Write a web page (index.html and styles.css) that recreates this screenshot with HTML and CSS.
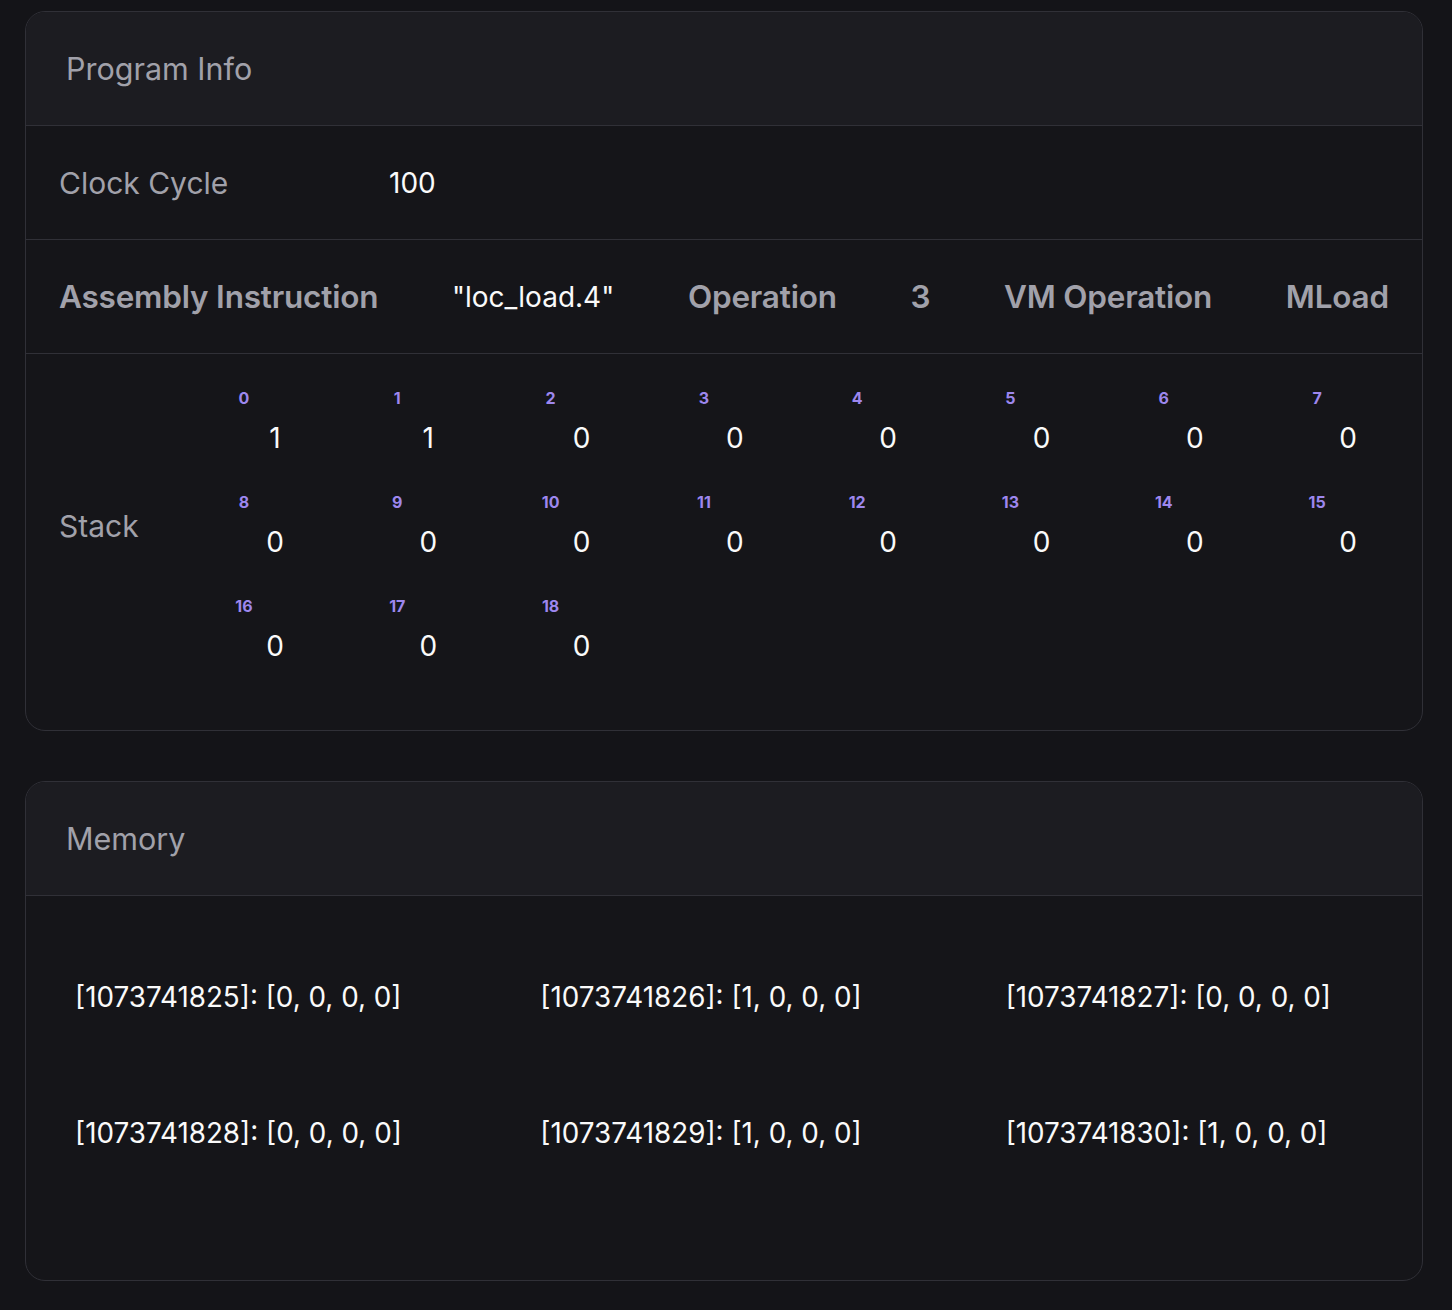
FILE: index.html
```html
<!DOCTYPE html>
<html lang="en">
<head>
  <meta charset="UTF-8">
  <title>Program Info</title>
  <link rel="stylesheet" href="styles.css">
</head>
<body>
  <div class="card">
    <div class="card-header">Program Info</div>
    <div class="row clock-row">
      <span class="label">Clock Cycle</span>
      <span class="value">100</span>
    </div>
    <div class="row asm-row">
      <span class="label strong">Assembly Instruction</span>
      <span class="value">"loc_load.4"</span>
      <span class="label strong">Operation</span>
      <span class="label strong">3</span>
      <span class="label strong">VM Operation</span>
      <span class="label strong">MLoad</span>
    </div>
    <div class="row stack-row">
      <span class="label stack-label">Stack</span>
      <div class="stack-grid">
        <div class="slot"><span class="idx">0</span><span class="val">1</span></div>
        <div class="slot"><span class="idx">1</span><span class="val">1</span></div>
        <div class="slot"><span class="idx">2</span><span class="val">0</span></div>
        <div class="slot"><span class="idx">3</span><span class="val">0</span></div>
        <div class="slot"><span class="idx">4</span><span class="val">0</span></div>
        <div class="slot"><span class="idx">5</span><span class="val">0</span></div>
        <div class="slot"><span class="idx">6</span><span class="val">0</span></div>
        <div class="slot"><span class="idx">7</span><span class="val">0</span></div>
        <div class="slot"><span class="idx">8</span><span class="val">0</span></div>
        <div class="slot"><span class="idx">9</span><span class="val">0</span></div>
        <div class="slot"><span class="idx">10</span><span class="val">0</span></div>
        <div class="slot"><span class="idx">11</span><span class="val">0</span></div>
        <div class="slot"><span class="idx">12</span><span class="val">0</span></div>
        <div class="slot"><span class="idx">13</span><span class="val">0</span></div>
        <div class="slot"><span class="idx">14</span><span class="val">0</span></div>
        <div class="slot"><span class="idx">15</span><span class="val">0</span></div>
        <div class="slot"><span class="idx">16</span><span class="val">0</span></div>
        <div class="slot"><span class="idx">17</span><span class="val">0</span></div>
        <div class="slot"><span class="idx">18</span><span class="val">0</span></div>
      </div>
    </div>
  </div>

  <div class="card">
    <div class="card-header">Memory</div>
    <div class="memory-grid">
      <div class="mem-cell">[1073741825]: [0, 0, 0, 0]</div>
      <div class="mem-cell">[1073741826]: [1, 0, 0, 0]</div>
      <div class="mem-cell">[1073741827]: [0, 0, 0, 0]</div>
      <div class="mem-cell">[1073741828]: [0, 0, 0, 0]</div>
      <div class="mem-cell">[1073741829]: [1, 0, 0, 0]</div>
      <div class="mem-cell">[1073741830]: [1, 0, 0, 0]</div>
    </div>
  </div>
</body>
</html>
```

FILE: styles.css
```css
body {
  margin: 0;
  padding: 11px 29px 29px 25px;
  background: #141418;
  font-family: Inter, "Noto Sans", sans-serif;
  color: #f4f4f5;
}
.card {
  background: #151519;
  border: 1px solid #303037;
  border-radius: 20px;
  overflow: hidden;
  margin-bottom: 50px;
}
.card-header {
  background: #1c1c21;
  height: 113px;
  display: flex;
  align-items: center;
  padding-left: 40px;
  font-size: 30.5px;
  color: #a1a1aa;
  border-bottom: 1px solid #303037;
}
.row {
  display: flex;
  align-items: center;
  padding: 0 33px;
  border-bottom: 1px solid #303037;
}
.label {
  font-size: 30px;
  color: #a1a1aa;
}
.label.strong {
  font-size: 31.5px;
  font-weight: 600;
  letter-spacing: -0.2px;
}
.value {
  font-size: 28px;
  color: #fafafa;
}
.clock-row {
  height: 113px;
}
.clock-row .label {
  width: 330px;
}
.asm-row {
  height: 113px;
  justify-content: space-between;
}
.stack-row {
  border-bottom: none;
  padding-top: 34px;
  padding-bottom: 67px;
}
.stack-label {
  width: 173px;
}
.stack-grid {
  display: grid;
  grid-template-columns: repeat(8, 62px);
  column-gap: 91.3px;
  row-gap: 37px;
}
.slot {
  display: flex;
  flex-direction: column;
}
.idx {
  width: 24px;
  text-align: center;
  font-size: 16px;
  line-height: 20px;
  font-weight: 700;
  color: #9d87ee;
}
.val {
  width: 38px;
  margin: 13px 0 0 24px;
  text-align: center;
  font-size: 28px;
  line-height: 34px;
  color: #fafafa;
}
.memory-grid {
  display: grid;
  grid-template-columns: repeat(3, 1fr);
  padding: 33px 0 79px;
}
.mem-cell {
  height: 136px;
  display: flex;
  align-items: center;
  padding-left: 49px;
  font-size: 27.8px;
  color: #fafafa;
}
```
